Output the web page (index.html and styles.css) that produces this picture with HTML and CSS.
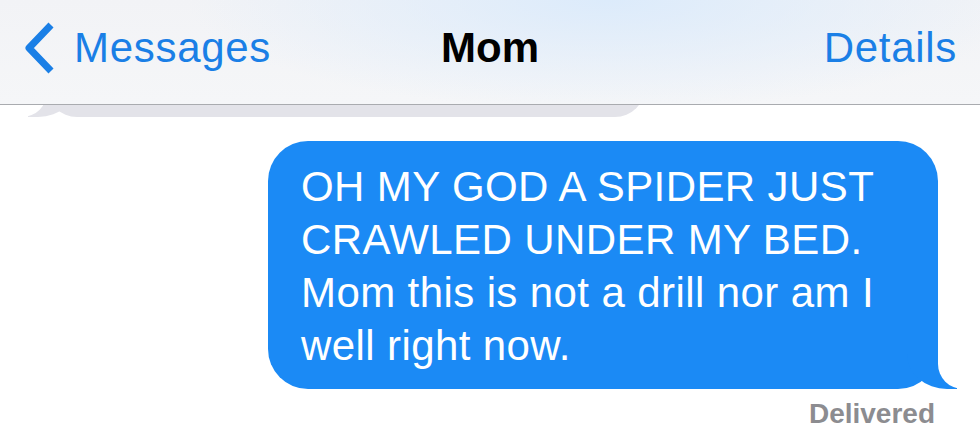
FILE: index.html
```html
<!DOCTYPE html>
<html lang="en">
<head>
  <meta charset="UTF-8">
  <meta name="viewport" content="width=device-width, initial-scale=1.0">
  <title>Mom</title>
  <link rel="stylesheet" href="styles.css">
</head>
<body>
  <header class="nav">
    <a class="nav-back" href="#">
      <svg class="chevron" width="32" height="54" viewBox="0 0 32 54">
        <polyline points="28,4 6,27 28,50" fill="none" stroke="#1a7fe6" stroke-width="7" stroke-linejoin="round"/>
      </svg>
      <span>Messages</span>
    </a>
    <div class="nav-title">Mom</div>
    <a class="nav-link" href="#">Details</a>
  </header>

  <main class="thread">
    <div class="bubble them"></div>
    <div class="bubble me">
      OH MY GOD A SPIDER JUST<br>
      CRAWLED UNDER MY BED.<br>
      Mom this is not a drill nor am I<br>
      well right now.
    </div>
    <div class="status">Delivered</div>
  </main>
</body>
</html>
```

FILE: styles.css
```css
body {
  margin: 0;
  background-color: #fff;
  font-family: "Liberation Sans", Arial, sans-serif;
  overflow: hidden;
}

/* barre du haut */
.nav {
  position: relative;
  z-index: 2;
  height: 105px;
  box-sizing: border-box;
  padding: 0 23px 9px 23px;
  display: flex;
  align-items: center;
  justify-content: space-between;
  border-bottom: 1px solid #a9abaf;
  background:
    radial-gradient(ellipse 420px 110px at 62% 0%, #dcebfb 0%, rgba(220, 235, 251, 0) 100%),
    linear-gradient(#f2f3f6, #f5f6f8);
}

.nav a {
  text-decoration: none;
  color: #1a7fe6;
  letter-spacing: 0.7px;
}

.nav-back {
  display: flex;
  align-items: center;
  gap: 19px;
  font-size: 42px;
  line-height: 42px;
}

.chevron {
  display: block;
}

.nav-title {
  position: absolute;
  left: 0;
  right: 0;
  top: 0;
  bottom: 9px;
  display: flex;
  align-items: center;
  justify-content: center;
  font-size: 42px;
  line-height: 42px;
  font-weight: bold;
  color: #000;
  pointer-events: none;
}

.nav-link {
  font-size: 42px;
  line-height: 42px;
}

/* messages */
.thread {
  display: flex;
  flex-direction: column;
}

.bubble {
  position: relative;
  border-radius: 40px;
}

.bubble::before,
.bubble::after {
  content: "";
  position: absolute;
  bottom: 0;
  height: 45px;
}

.them {
  margin-top: -48px;
  margin-left: 47px;
  width: 598px;
  height: 60px;
  background-color: #e3e3e9;
}

.them::before {
  left: -19px;
  width: 50px;
  background-color: #e3e3e9;
  border-bottom-right-radius: 40px 35px;
}

.them::after {
  left: -60px;
  width: 60px;
  background-color: #fff;
  border-bottom-right-radius: 25px;
}

.me {
  align-self: flex-end;
  margin-top: 24px;
  margin-right: 42px;
  width: 670px;
  box-sizing: border-box;
  padding: 19px 20px 17px 33px;
  background-color: #1b8af5;
  color: #fff;
  font-size: 42px;
  line-height: 53px;
  letter-spacing: 0.4px;
  white-space: nowrap;
}

.me::before {
  right: -19px;
  width: 50px;
  background-color: #1b8af5;
  border-bottom-left-radius: 40px 35px;
}

.me::after {
  right: -60px;
  width: 60px;
  background-color: #fff;
  border-bottom-left-radius: 25px;
}

.status {
  align-self: flex-end;
  margin-top: 8px;
  padding-right: 45px;
  font-size: 28px;
  line-height: 34px;
  font-weight: bold;
  color: #8c8c90;
}
```
